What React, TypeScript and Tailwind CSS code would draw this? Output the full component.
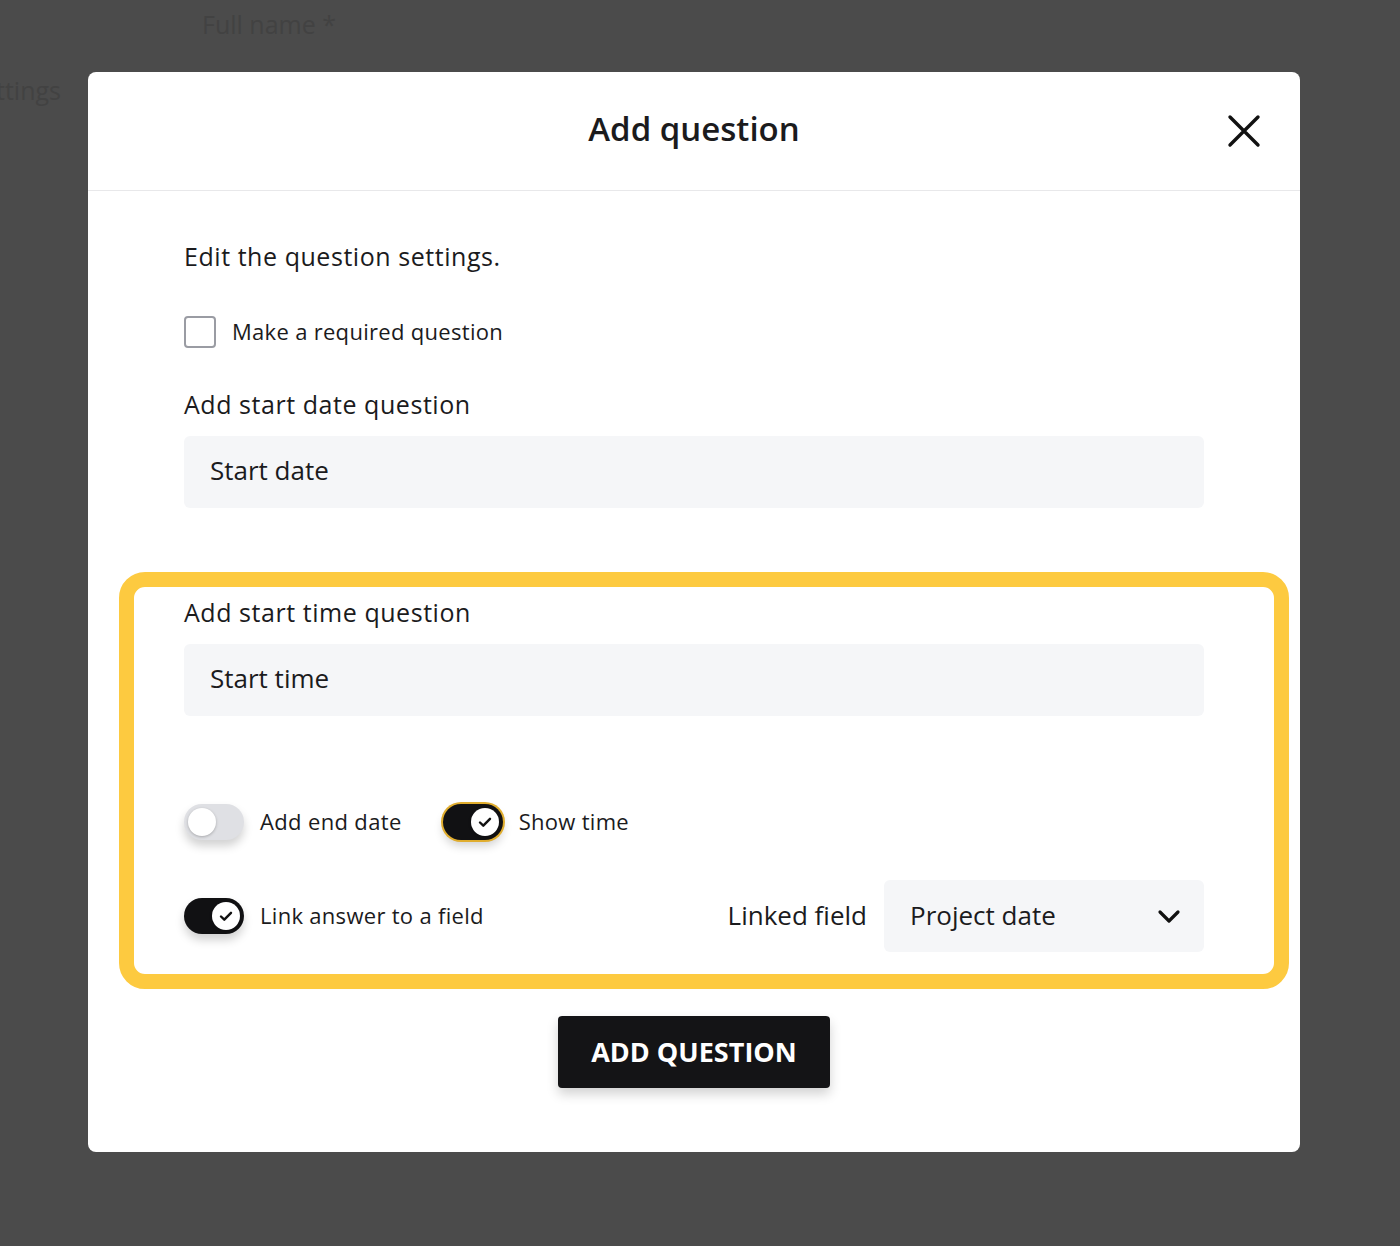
import React, { useState } from 'react'

const font = { fontFamily: '"Open Sans", Lato, sans-serif' }

function Check() {
  return (
    <svg width="18" height="18" viewBox="0 0 18 18" fill="none">
      <path d="M4 9.5l3.3 3.2L14 5.8" stroke="#111" strokeWidth="2.4" strokeLinecap="round" strokeLinejoin="round" />
    </svg>
  )
}

function Toggle({ on, focused }: { on: boolean; focused?: boolean }) {
  return (
    <div
      className={
        'relative w-[60px] h-[36px] shrink-0 rounded-full shadow-[0_6px_10px_rgba(0,0,0,0.18)] flex items-center px-[4px] ' +
        (on ? 'bg-[#111113] justify-end' : 'bg-[#dfe0e4] justify-start') +
        (focused ? ' ring-2 ring-[#e0ad2e]' : '')
      }
    >
      <div className="w-[28px] h-[28px] rounded-full bg-white shadow-[0_1px_3px_rgba(0,0,0,0.25)] flex items-center justify-center">
        {on && <Check />}
      </div>
    </div>
  )
}

export default function App() {
  const [required, setRequired] = useState(false)

  return (
    <div className="relative w-[1400px] h-[1246px] bg-[#4b4b4b] overflow-hidden" style={font}>
      {/* page behind the overlay */}
      <div className="pl-[202px] pt-[4px] text-[25px] leading-[40px] text-[#424242]">Full name *</div>
      <div className="ml-[-4px] mt-[26px] text-[25px] leading-[40px] text-[#424242]">ttings</div>

      {/* modal */}
      <div className="absolute left-[88px] top-[72px] w-[1212px] bg-white rounded-[8px] text-[#1b1b1d]">
        <div className="relative h-[119px] flex items-center justify-center border-b border-[#e8e8ea]">
          <h1 className="text-[33px] font-semibold pb-[4px]">Add question</h1>
          <button className="absolute right-[38px] top-[41px] w-[36px] h-[36px] flex items-center justify-center">
            <svg width="34" height="34" viewBox="0 0 34 34" fill="none">
              <path d="M3 3l28 28M31 3L3 31" stroke="#111" strokeWidth="3.4" strokeLinecap="round" />
            </svg>
          </button>
        </div>

        <div className="px-[96px] pt-[49px] pb-[64px]">
          <p className="text-[25px] leading-[32px] tracking-[0.55px]">Edit the question settings.</p>

          <label className="mt-[44px] flex items-center gap-[16px] cursor-pointer">
            <input
              type="checkbox"
              checked={required}
              onChange={(e) => setRequired(e.target.checked)}
              className="w-[32px] h-[32px] appearance-none rounded-[4px] border-2 border-[#9a9ca3] bg-white"
            />
            <span className="text-[22px] leading-[30px] tracking-[0.3px] pb-[2px]">Make a required question</span>
          </label>

          <p className="mt-[40px] text-[25px] leading-[32px] tracking-[0.55px]">Add start date question</p>
          <div className="mt-[16px] h-[72px] rounded-[6px] bg-[#f5f6f8] flex items-center px-[26px] pb-[3px] text-[26px]">
            Start date
          </div>

          <div className="mt-[64px] ml-[-65px] mr-[-85px] rounded-[26px] border-[15px] border-[#fdca40]">
            <div className="pl-[50px] pr-[70px] pt-[9px] pb-[22px]">
              <p className="text-[25px] leading-[32px] tracking-[0.55px]">Add start time question</p>
              <div className="mt-[16px] h-[72px] rounded-[6px] bg-[#f5f6f8] flex items-center px-[26px] pb-[3px] text-[26px]">
                Start time
              </div>

              <div className="mt-[88px] flex items-center">
                <Toggle on={false} />
                <span className="ml-[16px] text-[22px] leading-[30px] tracking-[0.35px] pb-[2px]">Add end date</span>
                <div className="ml-[41px]">
                  <Toggle on focused />
                </div>
                <span className="ml-[16px] text-[22px] leading-[30px] tracking-[0.3px] pb-[2px]">Show time</span>
              </div>

              <div className="mt-[40px] flex items-center">
                <Toggle on />
                <span className="ml-[16px] text-[22px] leading-[30px] tracking-[0.3px] pb-[2px]">Link answer to a field</span>
                <span className="ml-auto mr-[17px] text-[26px] leading-[34px] pb-[2px]">Linked field</span>
                <div className="w-[320px] h-[72px] rounded-[6px] bg-[#f5f6f8] flex items-center justify-between pl-[26px] pr-[22px] text-[26px]">
                  <span className="pb-[2px]">Project date</span>
                  <svg width="26" height="26" viewBox="0 0 26 26" fill="none">
                    <path d="M4 9l9 9 9-9" stroke="#111" strokeWidth="3.2" strokeLinecap="round" strokeLinejoin="round" />
                  </svg>
                </div>
              </div>
            </div>
          </div>

          <div className="mt-[27px] flex justify-center">
            <button className="h-[72px] w-[272px] rounded-[4px] bg-[#141416] text-white text-[27px] font-bold shadow-[0_6px_12px_rgba(0,0,0,0.18)]">
              ADD QUESTION
            </button>
          </div>
        </div>
      </div>
    </div>
  )
}
